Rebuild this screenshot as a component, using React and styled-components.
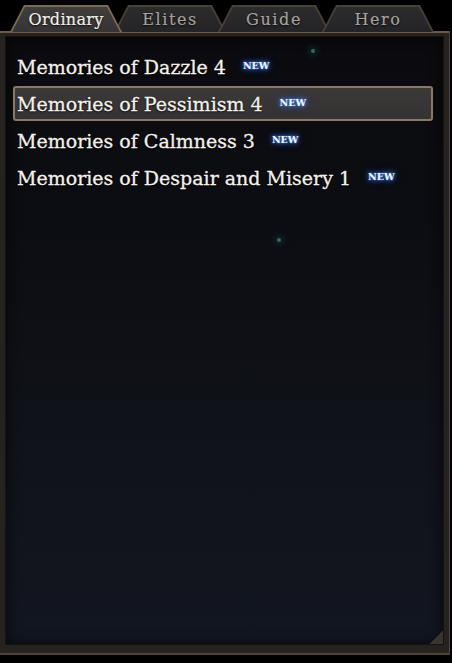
import React, {useState} from 'react'
import styled, {createGlobalStyle} from "styled-components";

const GlobalStyle = createGlobalStyle`
  html, body {
    margin: 0;
    padding: 0;
    background: #000;
  }
  #root {
    width: 452px;
    height: 663px;
    overflow: hidden;
  }
`

const tabs = ['Ordinary', 'Elites', 'Guide', 'Hero'];

const entries = [
	{name: 'Memories of Dazzle 4', isNew: true},
	{name: 'Memories of Pessimism 4', isNew: true},
	{name: 'Memories of Calmness 3', isNew: true},
	{name: 'Memories of Despair and Misery 1', isNew: true},
];

export default function App() {
	const [tab, setTab] = useState(0);
	const [selected, setSelected] = useState(1);

	return (
		<>
			<GlobalStyle/>
			<Screen>
				<TabBar>
					{tabs.map((t, i) => (
						<Tab key={t} $active={i === tab} $index={i} onClick={() => setTab(i)}>
							<TabInner $active={i === tab}>{t}</TabInner>
						</Tab>
					))}
				</TabBar>
				<Frame>
					<Panel>
						<List>
							{entries.map((e, i) => (
								<Row key={e.name} $selected={i === selected} onClick={() => setSelected(i)}>
									<RowText>{e.name}</RowText>
									{e.isNew && <NewBadge>NEW</NewBadge>}
								</Row>
							))}
						</List>
						<Speck style={{left: 305, top: 12}}/>
						<Speck style={{left: 271, top: 201}}/>
						<CornerMark/>
					</Panel>
				</Frame>
			</Screen>
		</>
	)
}

const Screen = styled.div`
  display: flex;
  flex-direction: column;
  width: 452px;
  height: 663px;
  background: #000;
  font-family: "DejaVu Serif", "Liberation Serif", serif;
`

const TabBar = styled.div`
  display: flex;
  height: 26px;
  padding: 5px 0 0 10px;
  position: relative;
  z-index: 1;
`

const Tab = styled.div`
  width: 112px;
  height: 27px;
  margin-left: ${p => p.$index === 0 ? '0' : '-8px'};
  padding: 2px 2px 0;
  box-sizing: border-box;
  background: ${p => p.$active ? '#7a6a52' : '#4a4034'};
  clip-path: polygon(14px 0, calc(100% - 14px) 0, 100% 100%, 0 100%);
  z-index: ${p => p.$active ? 2 : 1};
  cursor: pointer;
`

const TabInner = styled.div`
  height: 100%;
  display: flex;
  align-items: center;
  justify-content: center;
  padding-bottom: 1px;
  box-sizing: border-box;
  clip-path: polygon(13px 0, calc(100% - 13px) 0, 100% 100%, 0 100%);
  background: ${p => p.$active
	? 'linear-gradient(#403d3d, #363434)'
	: 'linear-gradient(#2c2b2d, #242325)'};
  color: ${p => p.$active ? '#f2eee8' : '#a6a29e'};
  font-size: 16px;
  letter-spacing: ${p => p.$active ? '0.3px' : '1.6px'};
  -webkit-text-stroke: 0.2px ${p => p.$active ? '#f2eee8' : '#a6a29e'};
  text-shadow: 0 1px 2px rgba(0,0,0,0.9);
`

const Frame = styled.div`
  flex: none;
  height: 624px;
  width: 450px;
  box-sizing: border-box;
  padding: 3px 5px 8px 5px;
  background: #26221f;
  border-top: 2px solid #6a5a46;
  border-bottom: 2px solid #4e4236;
  border-right: 1px solid #4e4236;
  display: flex;
`

const Panel = styled.div`
  position: relative;
  flex: 1;
  border: 1px solid #151312;
  background: linear-gradient(180deg, #0b0b0f 0%, #0c0d12 30%, #10131a 70%, #121620 100%);
  box-shadow: inset 0 0 14px rgba(0,0,0,0.7);
  overflow: hidden;
`

const List = styled.div`
  display: flex;
  flex-direction: column;
  gap: 2px;
  padding: 12px 10px 0 7px;
`

const Row = styled.div`
  display: flex;
  align-items: center;
  height: 31px;
  padding: 0 5px 0 2px;
  border: 2px solid ${p => p.$selected ? '#8c7866' : 'transparent'};
  border-radius: 3px;
  background: ${p => p.$selected ? 'linear-gradient(#3b3838, #353233)' : 'transparent'};
  cursor: pointer;
`

const RowText = styled.span`
  color: #f4f1ec;
  font-size: 19px;
  white-space: nowrap;
  -webkit-text-stroke: 0.3px #f4f1ec;
  text-shadow: 0 1px 2px rgba(0,0,0,0.9), 0 0 1px rgba(0,0,0,0.8);
`

const NewBadge = styled.span`
  margin-left: 17px;
  margin-top: -3px;
  color: #f0f4ff;
  font-size: 9.5px;
  font-weight: bold;
  text-shadow: 0 0 2px #5a95ff, 0 0 5px #3a7cf4, 0 0 9px rgba(45,106,232,0.8);
`

const Speck = styled.div`
  position: absolute;
  width: 4px;
  height: 4px;
  border-radius: 50%;
  background: #2f6a66;
  box-shadow: 0 0 6px 2px rgba(40,110,100,0.35);
`

const CornerMark = styled.div`
  position: absolute;
  right: 0;
  bottom: 0;
  width: 14px;
  height: 14px;
  background: linear-gradient(135deg, transparent 50%, #3a342e 50%);
`
